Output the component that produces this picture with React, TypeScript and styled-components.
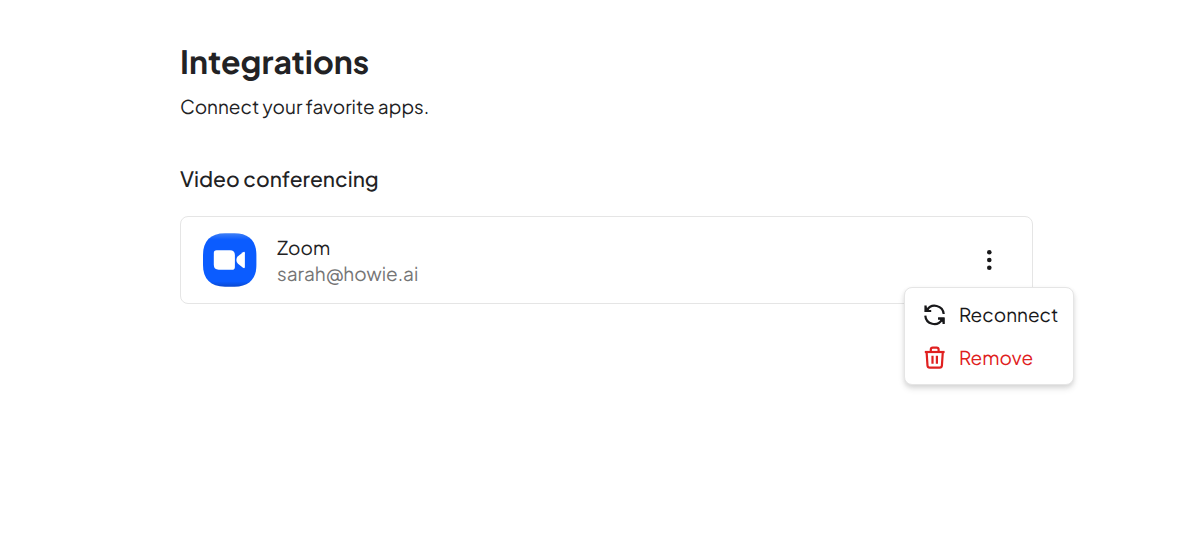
import React from "react";
import styled, { createGlobalStyle } from "styled-components";

const GlobalStyle = createGlobalStyle`
  * { box-sizing: border-box; }
  body {
    margin: 0;
    background: #fff;
    color: #222224;
    font-family: "Plus Jakarta Sans", Inter, "Liberation Sans", sans-serif;
    text-rendering: geometricPrecision;
    -webkit-font-smoothing: antialiased;
  }
`;

const Page = styled.main`
  min-height: 100vh;
  padding: 40px 167px 40px 15%;
`;

const Title = styled.h1`
  margin: 0;
  font-size: 32px;
  line-height: 44px;
  font-weight: 700;
`;

const Lead = styled.p`
  margin: 8px 0 0;
  font-size: 19px;
  line-height: 30px;
`;

const Section = styled.section`
  margin-top: 42px;
`;

const SectionTitle = styled.h2`
  margin: 0;
  padding-bottom: 22px;
  font-size: 21px;
  line-height: 30px;
  font-weight: 500;
`;

const Card = styled.div`
  display: flex;
  align-items: center;
  gap: 20px;
  padding: 16px 27px 16px 22px;
  border: 1px solid #e5e5e5;
  border-radius: 8px;
`;

const Details = styled.div`
  flex: 1;
  display: flex;
  flex-direction: column;
  padding-top: 2px;
  font-size: 19px;
  line-height: 26px;
`;

const Account = styled.span`
  color: #757575;
`;

const MenuAnchor = styled.div`
  position: relative;
  display: flex;
`;

const IconButton = styled.button`
  display: flex;
  align-items: center;
  justify-content: center;
  width: 32px;
  height: 32px;
  padding: 0;
  border: 0;
  background: none;
  color: #18181a;
  cursor: pointer;
`;

const Menu = styled.div`
  position: absolute;
  top: 43px;
  left: -69px;
  width: 170px;
  padding: 5px 0;
  border: 1px solid #e5e5e5;
  border-radius: 8px;
  background: #fff;
  box-shadow: 0 4px 6px rgba(0, 0, 0, 0.1), 0 2px 4px rgba(0, 0, 0, 0.08);
`;

const MenuItem = styled.button<{ $danger?: boolean }>`
  display: flex;
  align-items: center;
  gap: 12px;
  width: 100%;
  height: 43px;
  padding: 0 0 0 18px;
  border: 0;
  background: none;
  color: ${({ $danger }) => ($danger ? "#e02020" : "#18181a")};
  font: inherit;
  font-size: 19px;
  line-height: 28px;
  text-rendering: inherit;
  text-align: left;
  cursor: pointer;
`;

const ZoomLogo = () => (
  <svg width="54" height="54" viewBox="0 0 54 54" role="img" aria-label="Zoom logo">
    <defs>
      <linearGradient id="zoomFill" x1="0" y1="0" x2="0" y2="1">
        <stop offset="0" stopColor="#3f7ff5" />
        <stop offset="0.12" stopColor="#0b5cff" />
        <stop offset="0.9" stopColor="#0b5cff" />
        <stop offset="1" stopColor="#0a48d0" />
      </linearGradient>
    </defs>
    <path
      d="M22 0.3H31.5C46 0.3 53.4 8 53.4 22V32C53.4 46 46 53.7 31.5 53.7H22C7.500 53.7 0 46 0 32V22C0 8 7.500 0.3 22 0.3Z"
      fill="url(#zoomFill)"
    />
    <path
      d="M13.5 17.3H27Q31.9 17.3 31.9 22.2V33.9Q31.9 36.7 29.1 36.7H15.7Q10.8 36.7 10.8 31.8V20.1Q10.8 17.3 13.5 17.3Z"
      fill="#fff"
    />
    <path
      d="M35 23.2L40 19.2Q41.9 18 41.9 20.2V33.8Q41.9 36 40 34.8L35 30.8Q33.4 29.5 33.4 27T35 23.2Z"
      fill="#fff"
    />
  </svg>
);

const DotsIcon = () => (
  <svg width="24" height="24" viewBox="0 0 24 24" fill="currentColor" aria-hidden="true">
    <circle cx="12.3" cy="4.3" r="2.3" />
    <circle cx="12.3" cy="12" r="2.3" />
    <circle cx="12.3" cy="19.8" r="2.3" />
  </svg>
);

const ReconnectIcon = () => (
  <svg
    width="24"
    height="24"
    viewBox="0 0 24 24"
    fill="none"
    stroke="currentColor"
    strokeWidth="2.2"
    aria-hidden="true"
  >
    <path d="M4 7.200A9 9 0 0 1 20.7 11" />
    <path d="M2.3 12.6A9 9 0 0 0 19 16.6" />
    <path d="M2.600 2.6V8H8.2" />
    <path d="M20.6 21V15.6H15" />
    <path d="M1.8 2.600L8.2 9H1.8Z" fill="currentColor" stroke="none" />
    <path d="M21.4 21L15 14.6H21.4Z" fill="currentColor" stroke="none" />
  </svg>
);

const TrashIcon = () => (
  <svg
    width="24"
    height="24"
    viewBox="0 0 24 24"
    fill="none"
    stroke="currentColor"
    strokeWidth="2.2"
    strokeLinejoin="round"
    aria-hidden="true"
  >
    <path d="M1.8 6H21.6" />
    <path d="M7.8 6V3.6Q7.8 1.6 9.8 1.6H13.6Q15.6 1.6 15.6 3.6V6" />
    <path d="M3.6 6L4.5 19.6Q4.7 21.6 6.7 21.6H16.7Q18.7 21.6 18.9 19.6L19.8 6" />
    <path d="M9.5 9.800V17.8M13.9 9.800V17.8" />
  </svg>
);

export default function App() {
  return (
    <>
      <GlobalStyle />
      <Page>
        <Title>Integrations</Title>
        <Lead>Connect your favorite apps.</Lead>
        <Section>
          <SectionTitle>Video conferencing</SectionTitle>
          <Card>
            <ZoomLogo />
            <Details>
              <span>Zoom</span>
              <Account>sarah@howie.ai</Account>
            </Details>
            <MenuAnchor>
              <IconButton type="button" aria-label="Zoom options" aria-haspopup="menu" aria-expanded="true">
                <DotsIcon />
              </IconButton>
              <Menu role="menu">
                <MenuItem type="button" role="menuitem">
                  <ReconnectIcon />
                  Reconnect
                </MenuItem>
                <MenuItem type="button" role="menuitem" $danger>
                  <TrashIcon />
                  Remove
                </MenuItem>
              </Menu>
            </MenuAnchor>
          </Card>
        </Section>
      </Page>
    </>
  );
}
